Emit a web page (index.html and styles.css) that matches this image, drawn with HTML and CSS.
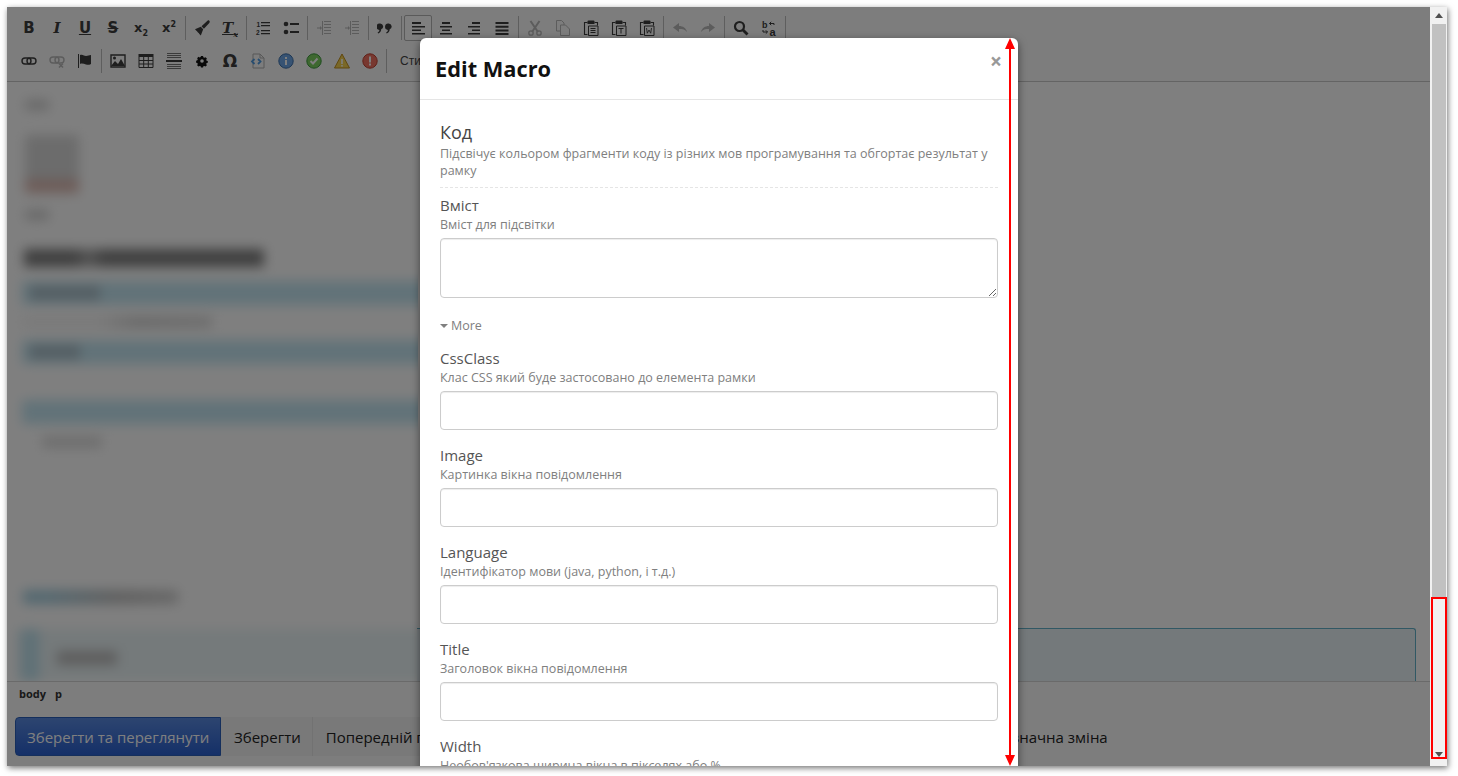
FILE: index.html
```html
<!DOCTYPE html>
<html lang="uk">
<head>
<meta charset="utf-8">
<title>Edit Macro</title>
<link rel="stylesheet" href="styles.css">
</head>
<body>
<div class="window">
  <div class="main">
    <div class="toolbar">
      <div class="row">
        <button class="tb"><span class="g g-b">B</span></button>
        <button class="tb"><span class="g g-i">I</span></button>
        <button class="tb"><span class="g g-u">U</span></button>
        <button class="tb"><span class="g g-s">S</span></button>
        <button class="tb"><span class="g g-x">x<sub>2</sub></span></button>
        <button class="tb"><span class="g g-x">x<sup>2</sup></span></button>
        <span class="sep"></span>
        <button class="tb"><svg class="ic" viewBox="0 0 16 16"><path d="M15.300.8c-.7-.7-1.500-.5-2.100.1L7.500 6.200l2.400 2.500 5.400-5.800c.6-.7.6-1.500 0-2.100z" fill="currentColor"/><path d="M6.800 6.800 1 9.200 6.800 15.500 9.200 9.300z" fill="currentColor"/><path d="M2.800 11.200 1.800 12.500M4.500 13l-1 1.300" stroke="#fafafa" stroke-width=".9"/></svg></button>
        <button class="tb"><span class="g g-tx">T<sub>x</sub></span></button>
        <span class="sep"></span>
        <button class="tb"><svg class="ic" viewBox="0 0 16 16"><path d="M6 2h9v1.200H6zM6 5h9v1.200H6zM6 10h9v1.200H6zM6 13h9v1.200H6z" fill="currentColor"/><text class="tiny" x="1.500" y="7">1</text><text class="tiny" x="1" y="15">2</text></svg></button>
        <button class="tb"><svg class="ic" viewBox="0 0 16 16"><circle cx="3" cy="4" r="2.300" fill="currentColor"/><circle cx="3" cy="12" r="2.300" fill="currentColor"/><path d="M7 3h9v2H7zM7 11h9v2H7z" fill="currentColor"/></svg></button>
        <span class="sep"></span>
        <button class="tb off"><svg class="ic" viewBox="0 0 16 16"><path d="M8 1h7v1H8zM8 4h7v1H8zM8 7h7v1H8zM8 10h7v1H8zM8 13h7v1H8zM6 1h1v14H6zM1 7.500h3V6l2 2-2 2V8.500H1z" fill="currentColor"/></svg></button>
        <button class="tb off"><svg class="ic" viewBox="0 0 16 16"><path d="M8 1h7v1H8zM8 4h7v1H8zM8 7h7v1H8zM8 10h7v1H8zM8 13h7v1H8zM6 1h1v14H6zM1 7.500h3V6l2 2-2 2V8.500H1z" fill="currentColor"/></svg></button>
        <span class="sep"></span>
        <button class="tb"><svg class="ic" viewBox="0 0 16 16"><path d="M3.200 3.500a3 3 0 0 1 1 5.800c0 1.800-1 3.300-3 4.200l-.6-.9c1.200-.8 1.700-1.600 1.800-2.700A3 3 0 0 1 3.200 3.500zM11.700 3.500a3 3 0 0 1 1 5.800c0 1.800-1 3.300-3 4.200l-.6-.9c1.200-.8 1.700-1.600 1.800-2.700a3 3 0 0 1 .8-6.400z" fill="currentColor"/></svg></button>
        <span class="sep"></span>
        <button class="tb on"><svg class="ic" viewBox="0 0 16 16"><path d="M2 2h9v2H2zM2 6h13v1.500H2zM2 9.500h9V11H2zM2 13h13v1.500H2z" fill="currentColor"/></svg></button>
        <button class="tb"><svg class="ic" viewBox="0 0 16 16"><path d="M4 2h8v2H4zM2 6h12v1.500H2zM4 9.500h8V11H4zM2 13h12v1.500H2z" fill="currentColor"/></svg></button>
        <button class="tb"><svg class="ic" viewBox="0 0 16 16"><path d="M6 2h8v2H6zM2 6h12v1.500H2zM6 9.500h8V11H6zM2 13h12v1.500H2z" fill="currentColor"/></svg></button>
        <button class="tb"><svg class="ic" viewBox="0 0 16 16"><path d="M1.500 2h13v2h-13zM1.500 5.700h13v2h-13zM1.500 9.400h13v2h-13zM1.500 13h13v2h-13z" fill="currentColor"/></svg></button>
        <span class="sep"></span>
        <button class="tb off"><svg class="ic" viewBox="0 0 16 16"><path d="M3.500 1 11 12M12.500 1 5 12" fill="none" stroke="currentColor" stroke-width="2"/><circle cx="4" cy="13" r="2.200" fill="none" stroke="currentColor" stroke-width="1.300"/><circle cx="12" cy="13" r="2.200" fill="none" stroke="currentColor" stroke-width="1.300"/></svg></button>
        <button class="tb off"><svg class="ic" viewBox="0 0 16 16"><path d="M1.500.5h5l2.500 2.500v2M1.500.5v10.500h4" fill="none" stroke="currentColor"/><path d="M5.500 5h5l4 4v6.500h-9z" fill="none" stroke="currentColor"/></svg></button>
        <button class="tb"><svg class="ic" viewBox="0 0 16 16"><use href="#clip"/><path d="M7.500 8.500h5M7.500 10.500h5M7.500 12.500h5" stroke="currentColor"/></svg></button>
        <button class="tb"><svg class="ic" viewBox="0 0 16 16"><use href="#clip"/><path d="M7.500 8.500h5M10 8.500v5" stroke="currentColor" stroke-width="1"/></svg></button>
        <button class="tb"><svg class="ic" viewBox="0 0 16 16"><use href="#clip"/><path d="M7.500 8l.8 5.200L10 10l1.700 3.200.8-5.200" fill="none" stroke="currentColor" stroke-width=".9"/></svg></button>
        <span class="sep"></span>
        <button class="tb off"><svg class="ic" viewBox="0 0 16 16"><path d="M7 3v3c4 0 7 2 8 6-2-2.500-4-3-8-3v3L1 7.500z" fill="currentColor"/></svg></button>
        <button class="tb off"><svg class="ic" viewBox="0 0 16 16"><path d="M9 3v3C5 6 2 8 1 12c2-2.500 4-3 8-3v3l6-4.500z" fill="currentColor"/></svg></button>
        <span class="sep"></span>
        <button class="tb"><svg class="ic" viewBox="0 0 16 16"><circle cx="6.500" cy="6.500" r="4.500" fill="none" stroke="currentColor" stroke-width="2.200"/><path d="M10 10l4.500 4.500" stroke="currentColor" stroke-width="2.800"/></svg></button>
        <button class="tb"><svg class="ic" viewBox="0 0 16 16"><text class="tiny wide" x="1" y="7.500">b</text><text class="tiny wider" x="8.500" y="15.500">a</text><path d="M13 5V3.500H8.500M10.200 1.800 8.500 3.500l1.700 1.700M2 10v2h4.500M4.800 10.300 6.500 12l-1.700 1.700" fill="none" stroke="currentColor"/></svg></button>
        <span class="sep"></span>
      </div>
      <div class="row">
        <button class="tb"><svg class="ic" viewBox="0 0 16 16"><rect x="1" y="5" width="9" height="6" rx="3" fill="none" stroke="currentColor" stroke-width="1.400"/><rect x="6" y="5" width="9" height="6" rx="3" fill="none" stroke="currentColor" stroke-width="1.400"/></svg></button>
        <button class="tb off"><svg class="ic" viewBox="0 0 16 16"><rect x="1" y="4" width="9" height="6" rx="3" fill="none" stroke="currentColor" stroke-width="1.400"/><rect x="6" y="4" width="9" height="6" rx="3" fill="none" stroke="currentColor" stroke-width="1.400"/><path d="M10 10.500l4 4M14 10.500l-4 4" stroke="currentColor" stroke-width="1.500"/></svg></button>
        <button class="tb"><svg class="ic" viewBox="0 0 16 16"><path d="M1 1h1v14H1z" fill="currentColor"/><path d="M3 2c3-1 4 1 6 1s3-1 5-1v9c-2 1-3 1-5 .5S5 10 3 11z" fill="currentColor"/></svg></button>
        <span class="sep"></span>
        <button class="tb"><svg class="ic" viewBox="0 0 16 16"><path d="M1 2h14v12H1z" fill="#fafafa" stroke="currentColor" stroke-width="1.400"/><path d="M1 13l4-5 3 3 3-5 4 7z" fill="currentColor"/><circle cx="4.500" cy="5" r="1.500" fill="currentColor"/></svg></button>
        <button class="tb"><svg class="ic" viewBox="0 0 16 16"><path d="M.5 1h15v3H.500z" fill="currentColor"/><path d="M1 4v10.500h14V4M1 7.500h14M1 11h14M5.700 4v10.500M10.300 4v10.500" fill="none" stroke="currentColor" stroke-width="1"/></svg></button>
        <button class="tb"><svg class="ic" viewBox="0 0 16 16"><path d="M1 .5h14M1 2.500h14M1 4.500h14M1 11.500h14M1 13.500h14M1 15.500h14" stroke="#777" stroke-width="1"/><path d="M0 8h16" stroke="currentColor" stroke-width="2"/></svg></button>
        <button class="tb"><svg class="ic gear" viewBox="0 0 16 16"><path d="M6.500 2h3l.4 1.800 1.500.7 1.600-1 2 2-1 1.600.6 1.500 1.700.4v2.500l-1.700.4-.6 1.500 1 1.600-2 2-1.600-1-1.500.6-.4 1.700h-3l-.4-1.700-1.500-.6-1.600 1-2-2 1-1.600-.7-1.500-1.700-.4V8.500l1.700-.4.700-1.500-1-1.600 2-2 1.600 1 1.500-.7z" fill="currentColor" transform="translate(2.400 1.700) scale(.7)"/><circle cx="8" cy="8" r="1.800" fill="#fafafa"/></svg></button>
        <button class="tb"><span class="g g-o">Ω</span></button>
        <button class="tb"><svg class="ic" viewBox="0 0 16 16"><path d="M3 1h7l4 4v10H3z" fill="none" stroke="#b0b0b0" stroke-width="1"/><path d="M10 1v4h4" fill="none" stroke="#b0b0b0"/><path d="M4.500 6 2 8.500 4.500 11M8 6l2.500 2.500L8 11" fill="none" stroke="#4f9ae0" stroke-width="1.800"/></svg></button>
        <button class="tb"><svg class="ic" viewBox="0 0 16 16"><circle cx="8" cy="8" r="7.200" fill="#6ea6e6" stroke="#3d70aa"/><rect x="7" y="7" width="2" height="5" fill="#fff"/><rect x="7" y="4" width="2" height="2" fill="#fff"/></svg></button>
        <button class="tb"><svg class="ic" viewBox="0 0 16 16"><circle cx="8" cy="8" r="7.200" fill="#7cd060" stroke="#3e9a3e"/><path d="M4.500 8l2.500 2.500L11.500 5.500" fill="none" stroke="#fff" stroke-width="2"/></svg></button>
        <button class="tb"><svg class="ic" viewBox="0 0 16 16"><path d="M8 1 15.500 15H.5z" fill="#f4d050" stroke="#c09020"/><rect x="7.200" y="6" width="1.600" height="5" fill="#fff"/><rect x="7.200" y="12" width="1.600" height="1.600" fill="#fff"/></svg></button>
        <button class="tb"><svg class="ic" viewBox="0 0 16 16"><circle cx="8" cy="8" r="7.200" fill="#f07060" stroke="#c04030"/><rect x="7" y="3.500" width="2" height="6" fill="#fff"/><rect x="7" y="10.500" width="2" height="2" fill="#fff"/></svg></button>
        <span class="sep"></span>
        <span class="styles">Стилі</span>
      </div>
    </div>

    <div class="content">
      <div class="blurred">
        <div class="bt w-s"></div>
        <div class="bt-block"></div>
        <div class="bt w-s"></div>
        <div class="heading"></div>
        <div class="bar"><span class="bar-t"></span></div>
        <div class="bt2"></div>
        <div class="bar"><span class="bar-t short"></span></div>
        <div class="bar gap"></div>
        <div class="bt3"></div>
        <div class="note"></div>
        <div class="box"><span class="box-side"></span><span class="box-t"></span></div>
      </div>
      <div class="panel"></div>
    </div>

    <div class="status"><span>body</span><span>p</span></div>
    <div class="footer">
      <button class="btn primary">Зберегти та переглянути</button>
      <button class="btn">Зберегти</button>
      <button class="btn">Попередній перегляд</button>
      <button class="btn">Скасувати</button>
      <label class="minor">Незначна зміна</label>
    </div>

    <div class="scrim">
      <div class="modal">
        <div class="modal-head">
          <h3>Edit Macro</h3>
          <span class="close">×</span>
        </div>
        <div class="modal-body">
          <div class="macro-intro">
            <div class="macro-name">Код</div>
            <div class="hint">Підсвічує кольором фрагменти коду із різних мов програмування та обгортає результат у рамку</div>
          </div>
          <div class="field">
            <div class="flabel">Вміст</div>
            <div class="hint">Вміст для підсвітки</div>
            <textarea class="ctl area"></textarea>
          </div>
          <div class="more"><span class="caret"></span>More</div>
          <div class="field">
            <div class="flabel">CssClass</div>
            <div class="hint">Клас CSS який буде застосовано до елемента рамки</div>
            <input class="ctl">
          </div>
          <div class="field">
            <div class="flabel">Image</div>
            <div class="hint">Картинка вікна повідомлення</div>
            <input class="ctl">
          </div>
          <div class="field">
            <div class="flabel">Language</div>
            <div class="hint">Ідентифікатор мови (java, python, і т.д.)</div>
            <input class="ctl">
          </div>
          <div class="field">
            <div class="flabel">Title</div>
            <div class="hint">Заголовок вікна повідомлення</div>
            <input class="ctl">
          </div>
          <div class="field">
            <div class="flabel">Width</div>
            <div class="hint">Необов'язкова ширина вікна в пікселях або %</div>
            <input class="ctl">
          </div>
        </div>
        <svg class="measure" width="12" height="728" viewBox="0 0 12 728"><path d="M5 8h2v712H5z" fill="#f00"/><path d="M6 0l5 11H1zM6 728l5-11H1z" fill="#f00"/></svg>
      </div>
    </div>
  </div>
  <div class="scrollbar">
    <span class="arrow up"></span>
    <span class="thumb"></span>
    <span class="arrow down"></span>
    <span class="mark"></span>
  </div>
</div>
<svg class="defs" width="0" height="0"><defs><g id="clip"><path d="M4.500 2.500h-3v12h3M11.500 2.500h3v3" fill="none" stroke="currentColor" stroke-width="1.100"/><path d="M4.500 1.500q0-1 1-1h5q1 0 1 1v2.500h-7z" fill="currentColor"/><path d="M5.500 6h9.500v9.500H5.500z" fill="none" stroke="currentColor" stroke-width="1"/></g></defs></svg>
</body>
</html>
```

FILE: styles.css
```css
* { box-sizing: border-box; }
html, body { margin: 0; height: 100%; background: #fff; overflow: hidden; }
body { padding: 7px 11px 10px 7px; }
button { font: inherit; }
.defs { position: absolute; }

.window {
  display: flex;
  height: 759px;
  box-shadow: 1px 2px 6px rgba(0, 0, 0, .55);
  background: #fff;
}
.main {
  position: relative;
  flex: 1;
  min-width: 0;
  display: flex;
  flex-direction: column;
  overflow: hidden;
  font-family: "Open Sans", sans-serif;
  color: #333;
}

/* toolbar */
.toolbar {
  height: 75px;
  padding: 4px 8px 0;
  background: #fafafa;
  border-bottom: 1px solid #c8c8c8;
  flex: none;
}
.row { display: flex; align-items: center; height: 33px; }
.tb {
  width: 28px;
  height: 26px;
  padding: 0;
  border: 1px solid transparent;
  background: none;
  color: #3c3c3c;
  display: flex;
  align-items: center;
  justify-content: center;
}
.tb.on { border-color: #b4b4b4; background: #fff; border-radius: 2px; }
.tb.off { color: #b8b8b8; }
.sep { width: 5px; height: 24px; display: flex; justify-content: center; position: relative; }
.sep::before { content: ""; width: 1px; height: 100%; background: #bdbdbd; }
.ic { width: 16px; height: 16px; display: block; }
.gear { color: #111; }
.tiny { font: bold 6.500px "Liberation Sans", sans-serif; fill: currentColor; }
.tiny.wide { font-size: 9px; }
.tiny.wider { font-size: 11px; }
.g { font-family: "DejaVu Sans", sans-serif; font-weight: 700; font-size: 15px; line-height: 16px; color: #3c3c3c; }
.g-i { font-family: "DejaVu Serif", serif; font-style: italic; }
.g-u { text-decoration: underline; }
.g-s { text-decoration: line-through; }
.g-x { font-size: 13px; }
.g-x sub, .g-x sup, .g-tx sub { font-size: 8px; line-height: 0; }
.g-tx { font-family: "DejaVu Serif", serif; font-style: italic; text-decoration: underline; text-decoration-skip-ink: none; }
.g-o { font-size: 17px; }
.styles { margin-left: 11px; font: 12px "Liberation Sans", sans-serif; color: #444; white-space: nowrap; }

/* blurred document */
.content { position: relative; flex: 1; min-height: 0; background: #fff; overflow: hidden; }
.blurred {
  width: 411px;
  height: 600px;
  overflow: hidden;
  display: flex;
  flex-direction: column;
}
.blurred > * { filter: blur(6px); flex: none; }
.bt { height: 10px; margin-left: 18px; background: #d0d0d0; width: 24px; margin-top: 18px; }
.bt-block { height: 60px; width: 54px; margin: 25px 0 0 18px; background: linear-gradient(#d8d8d8 0 70%, #dca89c 85%, #e8e8e8); }
.bt-block + .bt { margin-top: 15px; }
.heading { height: 18px; width: 240px; margin: 29px 0 0 17px; background: linear-gradient(90deg, #808080 0 50px, #aaa 65px, #808080 80px); }
.bar { height: 24px; width: 600px; margin: 14px 0 0 15px; background: #c4e6f2; }
.bar-t { display: block; height: 14px; width: 70px; margin: 5px 0 0 8px; background: #a8bcc6; }
.bar-t.short { width: 50px; }
.bt2 { height: 12px; width: 190px; margin: 11px 0 0 15px; background: linear-gradient(90deg, #f4f4f4 40%, #d4d4d4 60%, #dcdcdc 100%); }
.bt2 + .bar { margin-top: 12px; }
.bar.gap { margin-top: 36px; }
.bt3 { height: 12px; width: 60px; margin: 12px 0 0 35px; background: #dcdcdc; }
.note { height: 14px; width: 155px; margin: 142px 0 0 16px; background: linear-gradient(90deg, #a8d0e0 15%, #c0c0c0 60%, #d0d0d0); }
.box { height: 52px; width: 420px; margin: 25px 0 0 8px; background: #eaf4f6; position: relative; display: flex; }
.box-side { width: 18px; margin-left: 6px; height: 100%; background: #bfe2ee; }
.box-t { width: 60px; height: 14px; margin: 22px 0 0 18px; background: #bcbcbc; }
.panel {
  position: absolute;
  left: 410px;
  right: 14px;
  bottom: 0;
  height: 53px;
  border: 1px solid #62b0c8;
  border-width: 1px 1px 0 0;
  border-radius: 0 3px 0 0;
  background: #e8f2f6;
}

/* footer */
.status {
  flex: none;
  height: 31px;
  padding: 5px 12px 0;
  display: flex;
  gap: 9px;
  background: #fafafa;
  border-top: 1px solid #d4d4d4;
  font: bold 11px/14px "Open Sans", sans-serif;
  color: #333;
}
.footer {
  flex: none;
  height: 54px;
  padding: 5px 8px 0;
  display: flex;
  align-items: flex-start;
  background: #fafafa;
}
.btn {
  height: 39px;
  padding: 0 11px 0 13px;
  border: 0;
  border-right: 1px solid #e4e4e4;
  background: #f2f2f2;
  font-family: "Open Sans", sans-serif;
  font-size: 15px;
  color: #222;
  white-space: nowrap;
}
.btn.primary {
  width: 206px;
  padding: 0 11px;
  border: 1px solid #2b5fb8;
  border-radius: 4px 0 0 4px;
  background: linear-gradient(#5a8ae0, #2a60d0);
  color: #fff;
}
.minor { margin: 10px 0 0 398px; font-size: 15px; line-height: 20px; color: #222; white-space: nowrap; }

/* modal */
.scrim { position: absolute; inset: 0; background: rgba(0, 0, 0, .5); }
.modal {
  position: absolute;
  left: 413px;
  top: 31px;
  width: 598px;
  height: 800px;
  background: #fff;
  border-radius: 6px;
  box-shadow: 0 3px 9px rgba(0, 0, 0, .5);
  color: #333;
}
.modal-head {
  height: 62px;
  padding: 0 15px;
  border-bottom: 1px solid #e5e5e5;
  display: flex;
  align-items: center;
  justify-content: space-between;
}
.modal-head h3 { margin: 0; font-size: 21.800px; font-weight: 700; color: #111; line-height: 60px; }
.close { font-size: 21px; font-weight: 700; color: #999; margin: -14px 1px 0 0; line-height: 1; }
.modal-body { padding: 21px 20px 0; }
.macro-intro { padding-bottom: 8px; border-bottom: 1px dashed #e5e5e5; }
.macro-name { font-size: 18px; line-height: 22px; color: #444; }
.hint { font-size: 12.500px; line-height: 17px; color: #808080; }
.macro-intro .hint { margin-top: 2px; }
.flabel { font-size: 15px; line-height: 20px; color: #555; margin-bottom: 1px; }
.field { margin-bottom: 15px; }
.macro-intro + .field { margin-top: 7px; }
.ctl {
  display: block;
  width: 100%;
  height: 39px;
  margin-top: 5px;
  padding: 6px 12px;
  border: 1px solid #ccc;
  border-radius: 4px;
  background: #fff;
  box-shadow: inset 0 1px 1px rgba(0, 0, 0, .075);
}
.area { height: 60px; }
.more { font-size: 12.500px; line-height: 18px; color: #808080; margin: 19px 0 13px; display: flex; align-items: center; }
.caret { width: 0; height: 0; margin-right: 3px; border: 4px solid transparent; border-top-color: #808080; border-bottom: 0; }
.measure { position: absolute; left: 584px; top: 0; }

/* scrollbar */
.scrollbar {
  position: relative;
  flex: none;
  width: 17px;
  display: flex;
  flex-direction: column;
  align-items: center;
  background: #f1f1f1;
}
.arrow { flex: none; width: 0; height: 0; border: 4px solid transparent; }
.arrow.up { margin-top: 6px; border-bottom: 5px solid #505050; border-top: 0; }
.thumb { width: 14px; height: 573px; margin-top: 6px; background: #c1c1c1; }
.arrow.down { margin-top: auto; margin-bottom: 9px; border-top: 5px solid #505050; border-bottom: 0; }
.mark {
  position: absolute;
  left: 1px;
  right: 0;
  bottom: 7px;
  height: 162px;
  border: 2px solid #f00;
}
```
